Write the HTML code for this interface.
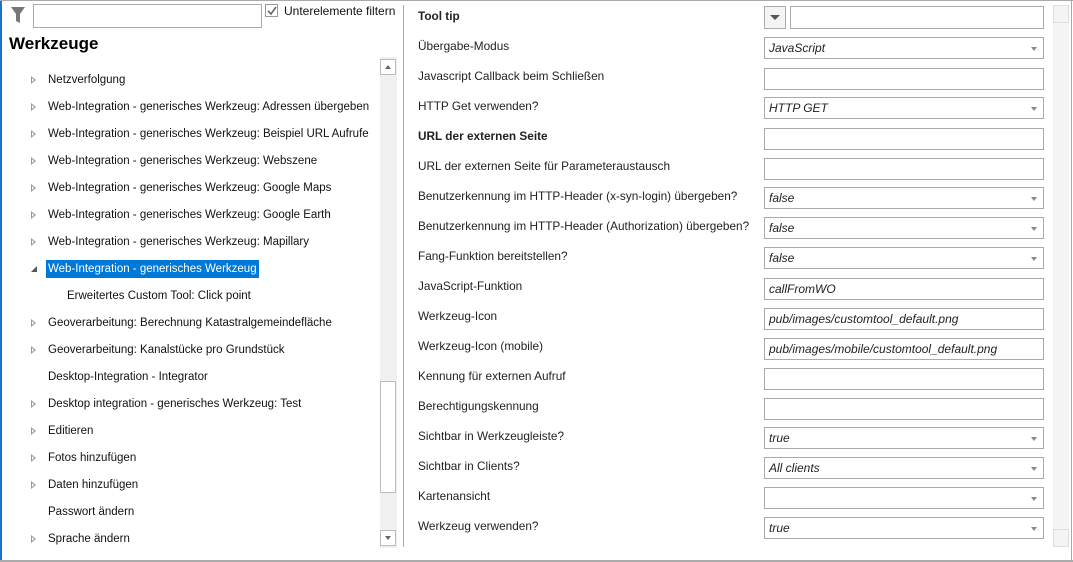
<!DOCTYPE html><html><head><meta charset="utf-8"><style>
*{box-sizing:border-box;margin:0;padding:0}
body{width:1073px;height:562px;overflow:hidden;background:#fff;font-family:"Liberation Sans",sans-serif;font-size:12px;color:#111;position:relative}
.a{position:absolute}
.tree div{position:absolute;left:48px;white-space:nowrap;height:18px;line-height:18px;font-size:11.5px}
.arr{position:absolute;left:31px;width:0;height:0;border-top:4px solid transparent;border-bottom:4px solid transparent;border-left:5px solid #999;}
.arr:before{content:"";position:absolute;left:-4px;top:-2px;border-top:2px solid transparent;border-bottom:2px solid transparent;border-left:2.5px solid #fff}
.lab{position:absolute;left:418px;color:#222;white-space:nowrap;line-height:14px;font-size:11.8px}
.in{position:absolute;left:764px;width:280px;height:22px;border:1px solid #aaa;background:#fff;font-style:italic;padding-left:4px;line-height:20px;color:#222}
.dd:after{content:"";position:absolute;right:6px;top:9px;border-left:3px solid transparent;border-right:3px solid transparent;border-top:4px solid #888}
</style></head><body>
<div class="a" style="left:0;top:0;width:2px;height:562px;background:#1a73c8"></div>
<div class="a" style="left:0;top:0;width:1073px;height:1px;background:#aaa"></div>
<div class="a" style="left:0;top:560px;width:1073px;height:2px;background:#aaa"></div>
<div class="a" style="left:1071px;top:0;width:1px;height:562px;background:#aaa"></div>
<svg class="a" style="left:10px;top:6px" width="16" height="18"><path d="M1 1H15L10 8V17L6 15V8Z" fill="#777"/></svg>
<div class="a" style="left:33px;top:4px;width:229px;height:24px;border:1px solid #aaa"></div>
<div class="a" style="left:265px;top:4px;width:13px;height:13px;border:1px solid #999"></div>
<svg class="a" style="left:266px;top:5px" width="12" height="12"><path d="M2 6L5 9L10 2" stroke="#666" stroke-width="1.6" fill="none"/></svg>
<div class="a" style="left:284px;top:4px;line-height:14px;font-size:12px">Unterelemente filtern</div>
<div class="a" style="left:9px;top:34px;font-size:17px;font-weight:bold;color:#000">Werkzeuge</div>
<div class="tree">
<span class="arr" style="top:76px"></span><div style="top:71px">Netzverfolgung</div>
<span class="arr" style="top:103px"></span><div style="top:98px">Web-Integration - generisches Werkzeug: Adressen übergeben</div>
<span class="arr" style="top:130px"></span><div style="top:125px">Web-Integration - generisches Werkzeug: Beispiel URL Aufrufe</div>
<span class="arr" style="top:157px"></span><div style="top:152px">Web-Integration - generisches Werkzeug: Webszene</div>
<span class="arr" style="top:184px"></span><div style="top:179px">Web-Integration - generisches Werkzeug: Google Maps</div>
<span class="arr" style="top:211px"></span><div style="top:206px">Web-Integration - generisches Werkzeug: Google Earth</div>
<span class="arr" style="top:238px"></span><div style="top:233px">Web-Integration - generisches Werkzeug: Mapillary</div>
<svg class="a" style="left:30px;top:265px" width="8" height="8"><path d="M7 1V7H1Z" fill="#555"/></svg>
<div style="top:260px;left:46px;background:#0078d7;color:#fff;padding:0 2px">Web-Integration - generisches Werkzeug</div>
<div style="top:287px;left:67px">Erweitertes Custom Tool: Click point</div>
<span class="arr" style="top:319px"></span><div style="top:314px">Geoverarbeitung: Berechnung Katastralgemeindefläche</div>
<span class="arr" style="top:346px"></span><div style="top:341px">Geoverarbeitung: Kanalstücke pro Grundstück</div>
<div style="top:368px">Desktop-Integration - Integrator</div>
<span class="arr" style="top:400px"></span><div style="top:395px">Desktop integration - generisches Werkzeug: Test</div>
<span class="arr" style="top:427px"></span><div style="top:422px">Editieren</div>
<span class="arr" style="top:454px"></span><div style="top:449px">Fotos hinzufügen</div>
<span class="arr" style="top:481px"></span><div style="top:476px">Daten hinzufügen</div>
<div style="top:503px">Passwort ändern</div>
<span class="arr" style="top:535px"></span><div style="top:530px">Sprache ändern</div>
</div>
<div class="a" style="left:380px;top:57px;width:17px;height:491px;background:#f0f0f0"></div>
<div class="a" style="left:380px;top:59px;width:16px;height:16px;border:1px solid #bbb;background:#fff"></div>
<svg class="a" style="left:380px;top:59px" width="16" height="16"><path d="M5 10L8 6L11 10Z" fill="#666"/></svg>
<div class="a" style="left:380px;top:381px;width:16px;height:112px;border:1px solid #bbb;background:#fff"></div>
<div class="a" style="left:380px;top:530px;width:16px;height:16px;border:1px solid #bbb;background:#fff"></div>
<svg class="a" style="left:380px;top:530px" width="16" height="16"><path d="M5 6L8 10L11 6Z" fill="#666"/></svg>
<div class="a" style="left:403px;top:5px;width:1px;height:542px;background:#aaa"></div>
<div class="a" style="left:1053px;top:5px;width:16px;height:542px;background:#f4f4f4"></div>
<div class="a" style="left:1053px;top:5px;width:16px;height:18px;border:1px solid #ddd"></div>
<div class="a" style="left:1053px;top:529px;width:16px;height:18px;border:1px solid #ddd"></div>

<div class="lab" style="top:9px;font-weight:bold">Tool tip</div>
<div class="a" style="left:764px;top:6px;width:22px;height:23px;border:1px solid #aaa;background:#f4f4f4"></div>
<svg class="a" style="left:764px;top:6px" width="22" height="23"><path d="M6 9H16L11 14Z" fill="#555"/></svg>
<div class="in" style="left:790px;width:254px;top:6px;height:23px"></div>
<div class="lab" style="top:39px">Übergabe-Modus</div><div class="in dd" style="top:37px">JavaScript</div>
<div class="lab" style="top:69px">Javascript Callback beim Schließen</div><div class="in" style="top:68px"></div>
<div class="lab" style="top:99px">HTTP Get verwenden?</div><div class="in dd" style="top:97px">HTTP GET</div>
<div class="lab" style="top:129px;font-weight:bold">URL der externen Seite</div><div class="in" style="top:128px"></div>
<div class="lab" style="top:159px">URL der externen Seite für Parameteraustausch</div><div class="in" style="top:158px"></div>
<div class="lab" style="top:189px">Benutzerkennung im HTTP-Header (x-syn-login) übergeben?</div><div class="in dd" style="top:187px">false</div>
<div class="lab" style="top:219px">Benutzerkennung im HTTP-Header (Authorization) übergeben?</div><div class="in dd" style="top:217px">false</div>
<div class="lab" style="top:249px">Fang-Funktion bereitstellen?</div><div class="in dd" style="top:247px">false</div>
<div class="lab" style="top:279px">JavaScript-Funktion</div><div class="in" style="top:278px">callFromWO</div>
<div class="lab" style="top:309px">Werkzeug-Icon</div><div class="in" style="top:308px">pub/images/customtool_default.png</div>
<div class="lab" style="top:339px">Werkzeug-Icon (mobile)</div><div class="in" style="top:338px">pub/images/mobile/customtool_default.png</div>
<div class="lab" style="top:369px">Kennung für externen Aufruf</div><div class="in" style="top:368px"></div>
<div class="lab" style="top:399px">Berechtigungskennung</div><div class="in" style="top:398px"></div>
<div class="lab" style="top:429px">Sichtbar in Werkzeugleiste?</div><div class="in dd" style="top:427px">true</div>
<div class="lab" style="top:459px">Sichtbar in Clients?</div><div class="in dd" style="top:457px">All clients</div>
<div class="lab" style="top:489px">Kartenansicht</div><div class="in dd" style="top:487px"></div>
<div class="lab" style="top:519px">Werkzeug verwenden?</div><div class="in dd" style="top:517px">true</div>
</body></html>
